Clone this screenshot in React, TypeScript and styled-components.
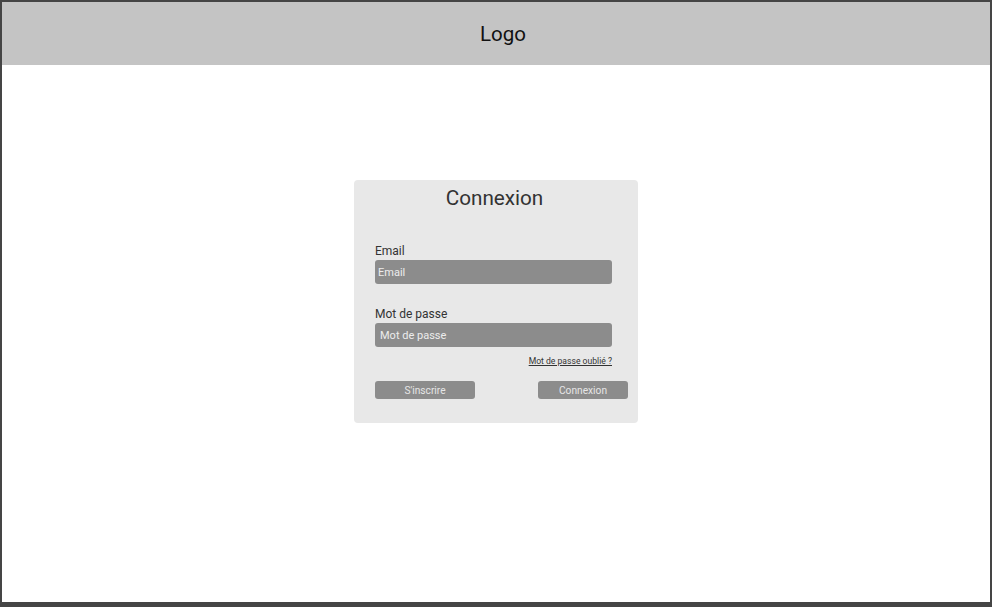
import React from "react";
import styled, { createGlobalStyle } from "styled-components";

const Global = createGlobalStyle`
  html, body { margin: 0; padding: 0; background: #444; }
  body { font-family: Roboto, "Liberation Sans", sans-serif; }
  * { box-sizing: border-box; }
`;

const Frame = styled.div`
  width: 992px;
  height: 607px;
  border-style: solid;
  border-color: #454545;
  border-width: 2px 2px 5px 2px;
  background: #ffffff;
  display: flex;
  flex-direction: column;
`;

const Header = styled.header`
  height: 63px;
  background: #c4c4c4;
  display: flex;
  align-items: center;
  justify-content: center;
  padding-left: 14px;
  font-size: 20.5px;
  color: #111;
`;

const Main = styled.main`
  flex: 1;
  display: flex;
  justify-content: center;
  align-items: flex-start;
  padding-top: 115px;
`;

const Card = styled.section`
  width: 284px;
  height: 243px;
  background: #e8e8e8;
  border-radius: 4px;
  padding: 6px 10px 0 21px;
  display: flex;
  flex-direction: column;
`;

const Title = styled.h1`
  margin: 0 0 34px 0;
  font-size: 20.7px;
  line-height: 24px;
  font-weight: 400;
  color: #333;
  text-align: center;
  padding-right: 14px;
`;

const Label = styled.label<{ $gap?: number }>`
  display: block;
  font-size: 12px;
  line-height: 14px;
  color: #333;
  margin: ${(p) => p.$gap ?? 0}px 0 2px 0;
`;

const Input = styled.div<{ $pad: number }>`
  width: 237px;
  height: 24px;
  background: #8c8c8c;
  border-radius: 3px;
  padding-left: ${(p) => p.$pad}px;
  display: flex;
  align-items: center;
  font-size: 11px;
  color: #ececec;
`;

const ForgotRow = styled.div`
  width: 237px;
  display: flex;
  justify-content: flex-end;
  margin-top: 9px;
`;

const Forgot = styled.a`
  font-size: 8.6px;
  line-height: 11px;
  color: #333;
  text-decoration: underline;
`;

const Actions = styled.div`
  display: flex;
  justify-content: space-between;
  margin-top: 14px;
`;

const Button = styled.button<{ $w: number }>`
  width: ${(p) => p.$w}px;
  height: 18px;
  border: none;
  border-radius: 3px;
  background: #8c8c8c;
  color: #e6e6e6;
  font-family: Roboto, "Liberation Sans", sans-serif;
  font-size: 10.2px;
  padding: 0;
`;

export default function App() {
  return (
    <>
      <Global />
      <Frame>
        <Header>Logo</Header>
        <Main>
          <Card>
            <Title>Connexion</Title>
            <Label>Email</Label>
            <Input $pad={3}>Email</Input>
            <Label $gap={23}>Mot de passe</Label>
            <Input $pad={5}>Mot de passe</Input>
            <ForgotRow>
              <Forgot>Mot de passe oublié ?</Forgot>
            </ForgotRow>
            <Actions>
              <Button $w={100}>S'inscrire</Button>
              <Button $w={90}>Connexion</Button>
            </Actions>
          </Card>
        </Main>
      </Frame>
    </>
  );
}
